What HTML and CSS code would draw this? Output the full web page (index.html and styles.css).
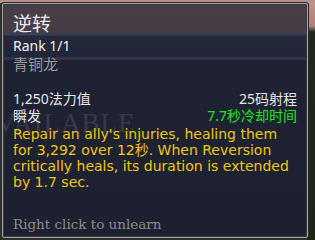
FILE: index.html
```html
<!DOCTYPE html>
<html lang="zh">

<head>
    <meta charset="UTF-8">
    <title>逆转</title>
    <link rel="stylesheet" href="styles.css">
</head>

<body>
    <div class="tooltip">
        <div class="title">逆转</div>
        <div class="rank">Rank 1/1</div>
        <div class="spec">青铜龙</div>

        <div class="stats">
            <div class="row">
                <span>1,250法力值</span>
                <span>25码射程</span>
            </div>
            <div class="row">
                <span>瞬发</span>
                <span class="cooldown">7.7秒冷却时间</span>
            </div>
        </div>

        <p class="desc">Repair an ally's injuries, healing them for 3,292 over 12秒. When Reversion critically heals, its duration is extended by 1.7 sec.</p>

        <div class="hint">Right click to unlearn</div>
    </div>
</body>

</html>
```

FILE: styles.css
```css
* {
    margin: 0;
    padding: 0;
    box-sizing: border-box;
}

html {
    background: #3a3436;
}

body {
    width: 315px;
    height: 240px;
    overflow: hidden;
    padding: 3px 0 0 2px;
    background:
        linear-gradient(180deg, #b98a86 0, #c29690 3px, transparent 3px),
        linear-gradient(180deg, #c0948e 0, #b0807c 26px, #1e2a1c 32px, #1b2618 100%) right top / 8px 100% no-repeat,
        #34302f;
    font-family: "Noto Sans", "Noto Sans CJK SC", sans-serif;
}

.tooltip {
    position: relative;
    width: 306px;
    height: 235px;
    padding: 8px 10px 0 10px;
    border: 1px solid #a3a39f;
    border-radius: 2px;
    box-shadow: inset 0 0 0 1px #3a3b3e, 0 0 0 1px #2a2c2e;
    background: linear-gradient(180deg,
        #4a3f48 0, #463c46 28px,
        #3b3e4e 29px, #3b3e4e 31px,
        #25283a 32px, #23263a 53px,
        #383b4c 54px, #383b4c 55px,
        #1f2232 56px, #1d2030 100%);
    color: #e6e6e6;
    overflow: hidden;
}

/* scene text behind the semi-transparent tooltip */
.tooltip::before {
    content: "VAILABLE";
    position: absolute;
    left: -7px;
    top: 104px;
    font-family: "Liberation Serif", serif;
    font-size: 27px;
    letter-spacing: 1px;
    color: #383b47;
}

.title {
    position: relative;
    font-size: 19px;
    line-height: 24px;
    color: #e8e8e8;
}

.rank {
    position: relative;
    margin-top: 1px;
    font-size: 14px;
    line-height: 18px;
    color: #f2f2f2;
}

.spec {
    position: relative;
    font-size: 15px;
    line-height: 18px;
    color: #9c9c9c;
}

.stats {
    position: relative;
    margin-top: 17px;
    font-size: 14px;
    line-height: 17px;
}

.row {
    display: flex;
    justify-content: space-between;
}

.cooldown {
    color: #22e622;
}

.desc {
    position: relative;
    margin-top: 2px;
    font-family: "DejaVu Sans", "Noto Sans CJK SC", sans-serif;
    font-size: 14px;
    line-height: 16px;
    color: #ecc910;
}

.hint {
    position: relative;
    margin-top: 26px;
    font-family: "DejaVu Serif", serif;
    font-size: 13.5px;
    color: #8c8c8c;
}
```
